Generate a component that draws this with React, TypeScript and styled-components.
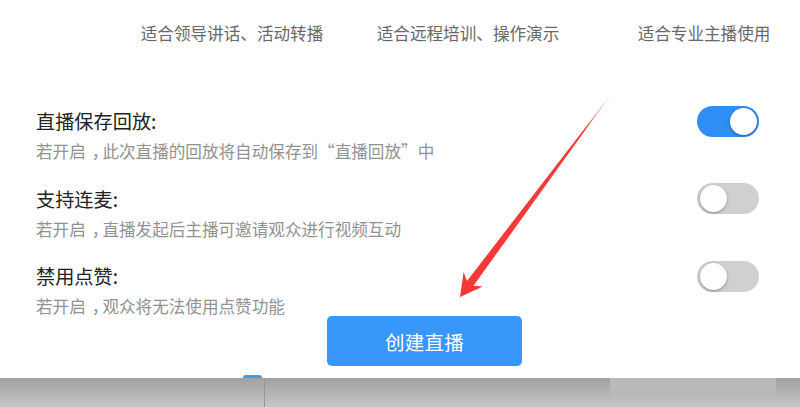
import React from "react";
import styled, { createGlobalStyle } from "styled-components";

const GlobalStyle = createGlobalStyle`
  html, body {
    margin: 0;
    padding: 0;
    background: #ffffff;
  }
  body {
    font-family: "Noto Sans CJK SC", "Noto Sans", sans-serif;
  }
`;

const Page = styled.div`
  position: relative;
  width: 800px;
  height: 407px;
  overflow: hidden;
  background: #ffffff;
  display: flex;
  flex-direction: column;
`;

const TagRow = styled.div`
  display: grid;
  grid-template-columns: repeat(3, 236px);
  padding-left: 114px;
  height: 66px;
  align-items: center;
`;

const Tag = styled.div`
  text-align: center;
  font-size: 16.6px;
  line-height: 66px;
  color: #686868;
  white-space: nowrap;
`;

const Settings = styled.div`
  display: flex;
  flex-direction: column;
  gap: 25.5px;
  padding: 43px 41px 0 36px;
`;

const SettingRow = styled.div`
  display: flex;
  flex-direction: column;
`;

const HeaderLine = styled.div`
  display: flex;
  align-items: center;
  justify-content: space-between;
  height: 24px;
`;

const Label = styled.div`
  font-size: 19.2px;
  line-height: 24px;
  color: #222222;
`;

const Desc = styled.div`
  margin-top: 8px;
  font-size: 16.6px;
  line-height: 20px;
  color: #929292;
  white-space: nowrap;
`;

const Punct = styled.span`
  padding-left: 0.36em;
  letter-spacing: -0.36em;
`;

const Toggle = styled.div<{ $on: boolean }>`
  position: relative;
  flex-shrink: 0;
  width: 62px;
  height: 31px;
  border-radius: 16px;
  background: ${(p) => (p.$on ? "#2f8ef3" : "#d0d0d0")};
`;

const Knob = styled.div<{ $on: boolean }>`
  position: absolute;
  top: 2px;
  ${(p) => (p.$on ? "right: 2px;" : "left: 3px;")}
  width: 27px;
  height: 27px;
  border-radius: 50%;
  background: #ffffff;
  box-shadow: 0 1px 3px rgba(0, 0, 0, 0.35);
`;

const ButtonBar = styled.div`
  display: flex;
  padding-left: 327px;
`;

const CreateButton = styled.button`
  width: 195px;
  height: 50px;
  border: none;
  border-radius: 5px;
  background: #3797fa;
  color: #ffffff;
  font-family: "Noto Sans CJK SC", "Noto Sans", sans-serif;
  font-size: 19.5px;
  letter-spacing: 0.2px;
  cursor: pointer;
`;

const BottomBar = styled.div`
  position: relative;
  margin-top: 12px;
  height: 29px;
  display: flex;
  align-items: flex-start;
  background: linear-gradient(#a1a1a1, #c6c6c6);
`;

const LeftPane = styled.div`
  width: 264px;
  height: 100%;
  border-right: 1px solid #979797;
  flex-shrink: 0;
`;

const Gap = styled.div<{ $w: number }>`
  width: ${(p) => p.$w}px;
  flex-shrink: 0;
`;

const FlatBlock = styled.div`
  width: 166px;
  height: 19px;
  background: #b9b9b9;
  flex-shrink: 0;
`;

const TabMark = styled.div`
  position: absolute;
  left: 243px;
  top: -3px;
  width: 19px;
  height: 3px;
  border-radius: 3px 3px 0 0;
  background: #3a9af5;
`;

const ArrowLayer = styled.svg`
  position: absolute;
  left: 0;
  top: 0;
  pointer-events: none;
`;

const settings = [
  { label: "直播保存回放:", desc: "此次直播的回放将自动保存到“直播回放”中", on: true },
  { label: "支持连麦:", desc: "直播发起后主播可邀请观众进行视频互动", on: false },
  { label: "禁用点赞:", desc: "观众将无法使用点赞功能", on: false },
];

export default function App() {
  return (
    <>
      <GlobalStyle />
      <Page>
        <TagRow>
          <Tag>适合领导讲话、活动转播</Tag>
          <Tag>适合远程培训、操作演示</Tag>
          <Tag>适合专业主播使用</Tag>
        </TagRow>
        <Settings>
          {settings.map((s) => (
            <SettingRow key={s.label}>
              <HeaderLine>
                <Label>{s.label}</Label>
                <Toggle $on={s.on}>
                  <Knob $on={s.on} />
                </Toggle>
              </HeaderLine>
              <Desc>
                若开启<Punct>，</Punct>
                {s.desc}
              </Desc>
            </SettingRow>
          ))}
        </Settings>
        <ButtonBar>
          <CreateButton>创建直播</CreateButton>
        </ButtonBar>
        <BottomBar>
          <TabMark />
          <LeftPane />
          <Gap $w={345} />
          <FlatBlock />
        </BottomBar>
        <ArrowLayer width="800" height="407" viewBox="0 0 800 407">
          <defs>
            <linearGradient id="arrowFade" gradientUnits="userSpaceOnUse" x1="612" y1="93" x2="460" y2="297">
              <stop offset="0" stopColor="#ff6b6b" stopOpacity="0.25" />
              <stop offset="0.18" stopColor="#f43c3c" stopOpacity="1" />
              <stop offset="1" stopColor="#f53737" stopOpacity="1" />
            </linearGradient>
          </defs>
          <polygon
            points="612,93 473.4,285.8 482.8,286.5 460,297 463.6,272.1 467,281"
            fill="url(#arrowFade)"
          />
        </ArrowLayer>
      </Page>
    </>
  );
}
